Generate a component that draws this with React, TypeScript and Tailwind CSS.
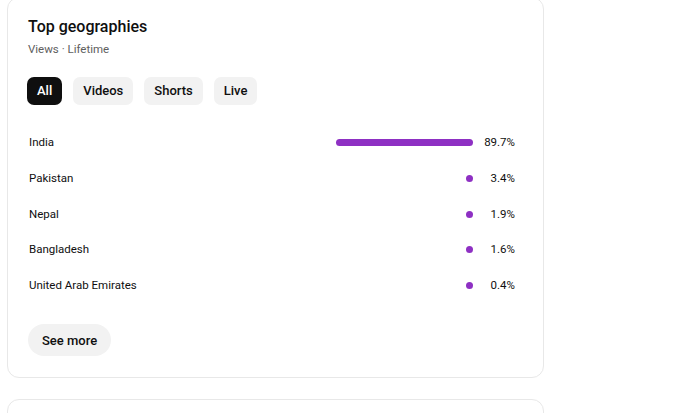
const rows = [
  { name: "India", pct: 89.7 },
  { name: "Pakistan", pct: 3.4 },
  { name: "Nepal", pct: 1.9 },
  { name: "Bangladesh", pct: 1.6 },
  { name: "United Arab Emirates", pct: 0.4 },
];

const chips = ["All", "Videos", "Shorts", "Live"];

export default function App() {
  return (
    <div
      className="w-[690px] h-[413px] overflow-hidden bg-white pl-[7px] text-[#0f0f0f]"
      style={{ fontFamily: "Roboto, 'Noto Sans', Arial, sans-serif" }}
    >
      <div className="w-[537px] -mt-[3px] flex flex-col gap-[21px]">
        {/* card */}
        <div className="border border-[#e8e8e8] rounded-[12px] px-5 pt-[18px] pb-[21px]">
          <h2 className="text-[16px] leading-[22px] font-medium">Top geographies</h2>
          <p className="text-[11.5px] leading-[16px] text-[#606060] mt-[3px]">Views · Lifetime</p>

          {/* chips */}
          <div className="flex gap-[11px] mt-[20px] -ml-[1px]">
            {chips.map((c, i) => (
              <button
                key={c}
                className={`h-[28px] px-[10px] rounded-[7px] text-[13px] font-medium ${
                  i === 0 ? "bg-[#0f0f0f] text-white" : "bg-[#f2f2f2] text-[#0f0f0f]"
                }`}
              >
                {c}
              </button>
            ))}
          </div>

          {/* rows */}
          <div className="mt-[20px] flex flex-col">
            {rows.map((r) => (
              <div key={r.name} className="h-[35.7px] flex items-center pl-[1px] pr-2">
                <span className="flex-1 text-[11.5px]">{r.name}</span>
                <div className="w-[140px] flex justify-end">
                  <div
                    className="h-[7px] rounded-full bg-[#8e30c3]"
                    style={{ width: Math.max(7, (r.pct / 89.7) * 137) }}
                  />
                </div>
                <span className="w-[42px] text-right text-[11.5px]">{r.pct}%</span>
              </div>
            ))}
          </div>

          <button className="mt-[21px] h-[32px] px-[14px] rounded-full bg-[#f2f2f2] text-[13px] font-medium">
            See more
          </button>
        </div>

        {/* next card */}
        <div className="border border-[#e8e8e8] rounded-[12px] h-[80px]" />
      </div>
    </div>
  );
}
